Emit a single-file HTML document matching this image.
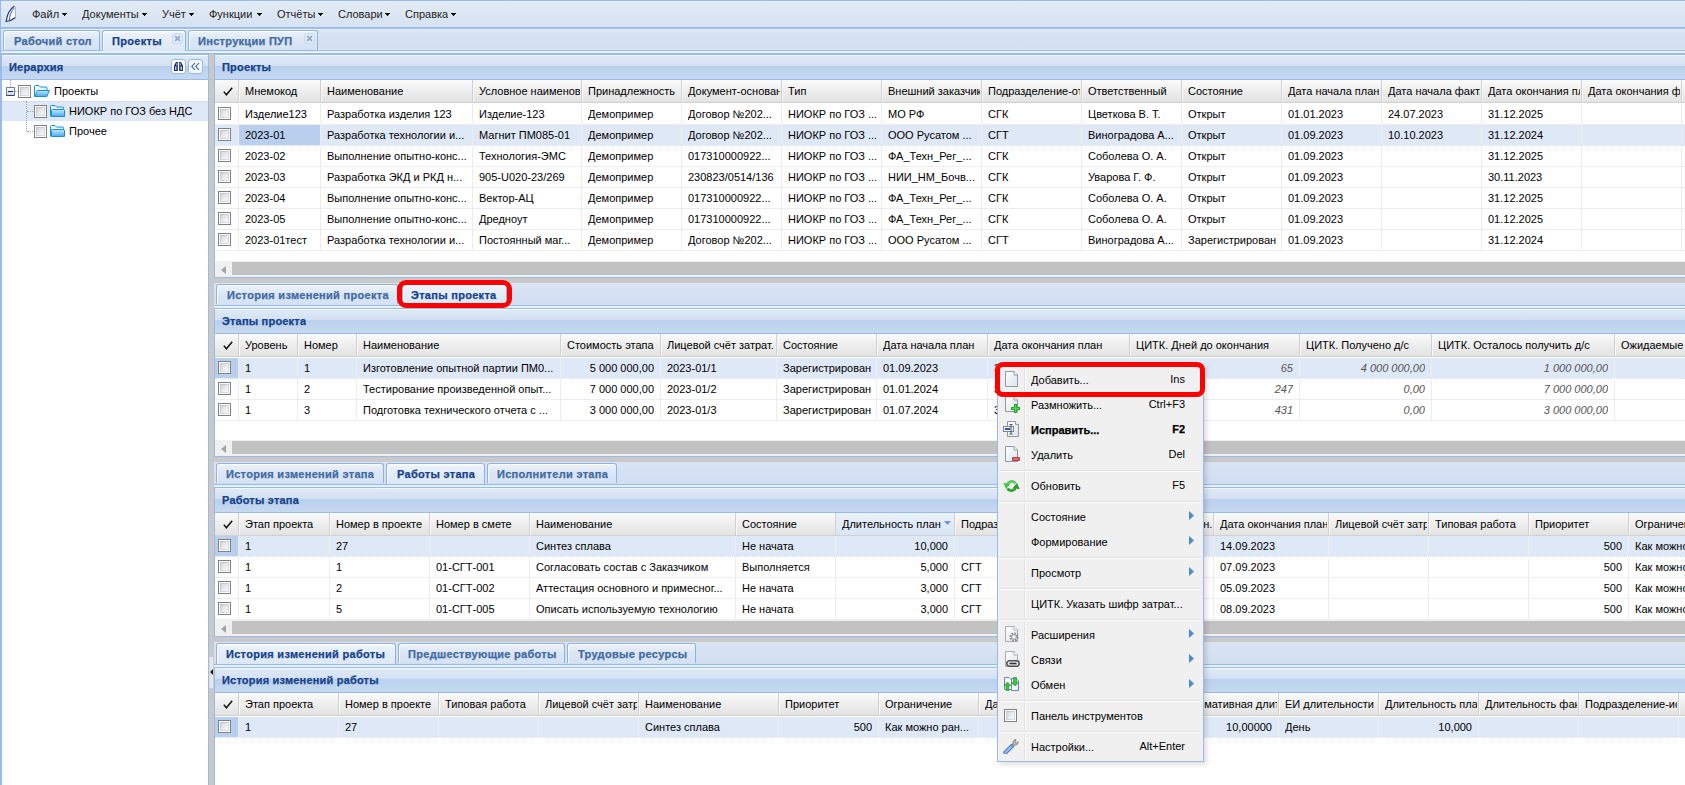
<!DOCTYPE html>
<html><head><meta charset="utf-8"><style>
html,body{margin:0;padding:0;}
body{width:1685px;height:785px;overflow:hidden;position:relative;background:#fff;font-family:"Liberation Sans",sans-serif;font-size:11px;color:#000;}
body>div,body>svg{position:absolute;box-sizing:content-box;}
.t{white-space:nowrap;overflow:hidden;}
.b{font-weight:bold;-webkit-text-stroke:0.25px currentColor;}
.mi{color:#222;}
.dd{display:inline-block;width:0;height:0;border-left:2.5px solid transparent;border-right:2.5px solid transparent;border-top:3px solid #000;margin-left:4px;vertical-align:2px;}
.cb{width:11px;height:11px;border:1px solid #808080;background:linear-gradient(135deg,#c5c9d1,#eef0f3 60%,#fafbfc);box-shadow:inset 0 0 0 1px #fff,inset 0 0 0 2px rgba(160,165,175,.35);}
</style></head><body>
<svg width="0" height="0" style="position:absolute"><defs>
<linearGradient id="gf" x1="0" y1="0" x2="0" y2="1"><stop offset="0" stop-color="#c4e6fc"/><stop offset="1" stop-color="#4aaaf0"/></linearGradient>
<linearGradient id="gp" x1="0" y1="0" x2="1" y2="1"><stop offset="0" stop-color="#ffffff"/><stop offset="1" stop-color="#dde3e8"/></linearGradient>
</defs></svg>
<div style="left:0px;top:0px;width:1685px;height:28px;background:linear-gradient(#e3ebf6,#d6e2f2)"></div>
<div style="left:0px;top:0px;width:1685px;height:1px;background:#99bbe8"></div>
<div style="left:0px;top:27px;width:1685px;height:1px;background:#99bbe8"></div>
<div style="left:0px;top:0px;width:1px;height:785px;background:#99bbe8"></div>
<svg style="left:4px;top:4px" width="14" height="20" viewBox="0 0 14 20"><path d="M10.5 2 C6 5 3 11 2.2 17.5 C6 17 9 15.5 11.5 13.5 L11.2 3 Z" fill="#f7f9fc"/><path d="M10.5 2 C6 5 3 11 2.2 17.5 C6 17 9 15.5 11.5 13.5" fill="none" stroke="#1f2f80" stroke-width="1.2"/><path d="M10.2 4 C7.5 7 5.6 11 5.3 16.2" fill="none" stroke="#3a4e9e" stroke-width="0.9"/><path d="M10.5 2 L11.3 3 L11.5 13.5" fill="none" stroke="#a3aab8" stroke-width="0.9"/></svg>
<div class="t mi" style="left:32px;top:7px;height:14px;line-height:14px">Файл</div>
<svg style="left:62px;top:13px" width="5" height="3" shape-rendering="crispEdges"><rect x="0" y="0" width="5" height="1" fill="#000"/><rect x="1" y="1" width="3" height="1" fill="#000"/><rect x="2" y="2" width="1" height="1" fill="#000"/></svg>
<div class="t mi" style="left:82px;top:7px;height:14px;line-height:14px">Документы</div>
<svg style="left:142px;top:13px" width="5" height="3" shape-rendering="crispEdges"><rect x="0" y="0" width="5" height="1" fill="#000"/><rect x="1" y="1" width="3" height="1" fill="#000"/><rect x="2" y="2" width="1" height="1" fill="#000"/></svg>
<div class="t mi" style="left:162px;top:7px;height:14px;line-height:14px">Учёт</div>
<svg style="left:189px;top:13px" width="5" height="3" shape-rendering="crispEdges"><rect x="0" y="0" width="5" height="1" fill="#000"/><rect x="1" y="1" width="3" height="1" fill="#000"/><rect x="2" y="2" width="1" height="1" fill="#000"/></svg>
<div class="t mi" style="left:209px;top:7px;height:14px;line-height:14px">Функции</div>
<svg style="left:257px;top:13px" width="5" height="3" shape-rendering="crispEdges"><rect x="0" y="0" width="5" height="1" fill="#000"/><rect x="1" y="1" width="3" height="1" fill="#000"/><rect x="2" y="2" width="1" height="1" fill="#000"/></svg>
<div class="t mi" style="left:277px;top:7px;height:14px;line-height:14px">Отчёты</div>
<svg style="left:318px;top:13px" width="5" height="3" shape-rendering="crispEdges"><rect x="0" y="0" width="5" height="1" fill="#000"/><rect x="1" y="1" width="3" height="1" fill="#000"/><rect x="2" y="2" width="1" height="1" fill="#000"/></svg>
<div class="t mi" style="left:338px;top:7px;height:14px;line-height:14px">Словари</div>
<svg style="left:385px;top:13px" width="5" height="3" shape-rendering="crispEdges"><rect x="0" y="0" width="5" height="1" fill="#000"/><rect x="1" y="1" width="3" height="1" fill="#000"/><rect x="2" y="2" width="1" height="1" fill="#000"/></svg>
<div class="t mi" style="left:405px;top:7px;height:14px;line-height:14px">Справка</div>
<svg style="left:451px;top:13px" width="5" height="3" shape-rendering="crispEdges"><rect x="0" y="0" width="5" height="1" fill="#000"/><rect x="1" y="1" width="3" height="1" fill="#000"/><rect x="2" y="2" width="1" height="1" fill="#000"/></svg>
<div style="left:1px;top:28px;width:1684px;height:22px;background:linear-gradient(#dbe6f4,#d2dff0)"></div>
<div style="left:1px;top:28px;width:1684px;height:1px;background:#a3c2ea"></div>
<div style="left:1px;top:29px;width:1684px;height:1px;background:#e4eefa"></div>
<div style="left:1px;top:50px;width:1684px;height:1px;background:#99bbe8"></div>
<div style="left:1px;top:51px;width:1684px;height:2px;background:#e8f2fb"></div>
<div style="left:1px;top:49px;width:1684px;height:1px;background:#dfe9f6"></div>
<div style="left:1px;top:53px;width:1684px;height:1px;background:#99bbe8"></div>
<div style="left:3px;top:30px;width:95px;height:19px;border:1px solid #8db2e3;border-bottom:none;border-radius:3px 3px 0 0;background:linear-gradient(#eef3fa 0,#dde7f5 40%,#d4e2f4 100%);box-shadow:inset 1px 1px 0 rgba(255,255,255,.8)"></div>
<div class="t b" style="left:14px;top:31px;height:20px;line-height:21px;color:#416aa3;letter-spacing:0.3px">Рабочий стол</div>
<div style="left:102px;top:30px;width:82px;height:20px;border:1px solid #8db2e3;border-bottom:none;border-radius:3px 3px 0 0;background:linear-gradient(#ffffff 0,#e9f0fa 3px,#dce8f7 100%);box-shadow:inset 1px 1px 0 rgba(255,255,255,.8)"></div>
<div class="t b" style="left:112px;top:31px;height:20px;line-height:21px;color:#15428b;letter-spacing:0.3px">Проекты</div>
<div style="left:172px;top:33px;width:9px;height:9px;border:1px solid #c5d6ee;border-radius:3px;background:#e6eef9"></div>
<svg style="left:174px;top:35px" width="7" height="7" viewBox="0 0 7 7"><path d="M1 1 L6 6 M6 1 L1 6" stroke="#93acd0" stroke-width="1.8"/></svg>
<div style="left:188px;top:30px;width:128px;height:19px;border:1px solid #8db2e3;border-bottom:none;border-radius:3px 3px 0 0;background:linear-gradient(#eef3fa 0,#dde7f5 40%,#d4e2f4 100%);box-shadow:inset 1px 1px 0 rgba(255,255,255,.8)"></div>
<div class="t b" style="left:198px;top:31px;height:20px;line-height:21px;color:#416aa3;letter-spacing:0.3px">Инструкции ПУП</div>
<div style="left:304px;top:33px;width:9px;height:9px;border:1px solid #c5d6ee;border-radius:3px;background:#e6eef9"></div>
<svg style="left:306px;top:35px" width="7" height="7" viewBox="0 0 7 7"><path d="M1 1 L6 6 M6 1 L1 6" stroke="#93acd0" stroke-width="1.8"/></svg>
<div style="left:1px;top:54px;width:207px;height:731px;background:#fff"></div>
<div style="left:1px;top:53px;width:1px;height:732px;background:#99bbe8"></div>
<div style="left:2px;top:54px;width:206px;height:25px;background:linear-gradient(#e0eaf7 0,#d3e1f3 12px,#bad0ee 12px,#c6d9f1 100%)"></div>
<div style="left:2px;top:54px;width:206px;height:1px;background:#f3f7fc"></div>
<div style="left:2px;top:79px;width:206px;height:1px;background:#99bbe8"></div>
<div class="t b" style="left:9px;top:54px;height:25px;line-height:26px;color:#15428b;letter-spacing:0.2px">Иерархия</div>
<div style="left:1px;top:54px;width:208px;height:1px;background:#99bbe8"></div>
<div style="left:2px;top:55px;width:206px;height:1px;background:#f3f7fc"></div>
<div style="left:208px;top:53px;width:1px;height:732px;background:#99bbe8"></div>
<div style="left:171px;top:59px;width:13px;height:13px;border:1px solid #99bbe8;border-radius:3px;background:#fff"></div>
<svg style="left:173px;top:61px" width="11" height="11" viewBox="0 0 11 11"><path d="M1 10 V4.7 L3 1 H4.8 V10 Z M6.2 10 V1 H8 L10 4.7 V10 Z" fill="#1c2a5e"/><rect x="1.9" y="5.4" width="1.6" height="3.6" fill="#a8c2f6"/><rect x="7.5" y="5.4" width="1.6" height="3.6" fill="#a8c2f6"/><rect x="3.2" y="2.3" width="1" height="2.2" fill="#9ab6f0"/><rect x="6.8" y="2.3" width="1" height="2.2" fill="#9ab6f0"/></svg>
<div style="left:188px;top:59px;width:13px;height:13px;border:1px solid #99bbe8;border-radius:3px;background:#f2f7fd"></div>
<svg style="left:190px;top:61px" width="11" height="11" viewBox="0 0 11 11"><path d="M5 2 L1.8 5.5 L5 9 M9 2 L5.8 5.5 L9 9" stroke="#2d5c9a" stroke-width="1.1" fill="none"/></svg>
<div style="left:10px;top:80px;width:0;height:7px;border-left:1px dotted #a0a0a0"></div>
<div style="left:15px;top:91px;width:3px;height:0;border-top:1px dotted #a0a0a0"></div>
<div style="left:2px;top:101px;width:206px;height:19px;background:#dfe8f6;border-top:1px dotted #c8d4e4"></div>
<div style="left:26px;top:101px;width:0;height:30px;border-left:1px dotted #a0a0a0"></div>
<div style="left:27px;top:111px;width:6px;height:0;border-top:1px dotted #a0a0a0"></div>
<div style="left:27px;top:131px;width:6px;height:0;border-top:1px dotted #a0a0a0"></div>
<div style="left:6px;top:87px;width:7px;height:7px;border:1px solid #6b7f9e;border-bottom-color:#2f4468;border-radius:1px;background:linear-gradient(#ffffff,#c9d5e6)"></div>
<div style="left:8px;top:91px;width:5px;height:1px;background:#1a2d55"></div>
<div class="cb" style="left:18px;top:85px"></div>
<svg style="left:34px;top:85px" width="16" height="12" viewBox="0 0 16 12"><path d="M0.5 11.5 V1.5 Q0.5 0.5 1.5 0.5 H5 L6.5 2 H12 Q13 2 13 3 V5" fill="#e8f4fd" stroke="#1b8fd2"/><path d="M0.8 11.5 L3.5 5.5 H15.5 L12.8 11.5 Z" fill="url(#gf)" stroke="#1b8fd2" stroke-linejoin="round"/></svg>
<div class="t" style="left:54px;top:81px;height:20px;line-height:20px;">Проекты</div>
<div class="cb" style="left:34px;top:105px"></div>
<svg style="left:50px;top:105px" width="15" height="12" viewBox="0 0 15 12"><path d="M0.5 11.5 V1.5 Q0.5 0.5 1.5 0.5 H5 L6.5 2 H12.5 Q13.5 2 13.5 3 V4.5" fill="#e8f4fd" stroke="#1b8fd2"/><path d="M1.5 11.5 V5.5 Q1.5 4.5 2.5 4.5 H13.5 Q14.5 4.5 14.5 5.5 V11.5 Z" fill="url(#gf)" stroke="#1b8fd2"/></svg>
<div class="t" style="left:69px;top:101px;height:20px;line-height:20px;">НИОКР по ГОЗ без НДС</div>
<div class="cb" style="left:34px;top:125px"></div>
<svg style="left:50px;top:125px" width="15" height="12" viewBox="0 0 15 12"><path d="M0.5 11.5 V1.5 Q0.5 0.5 1.5 0.5 H5 L6.5 2 H12.5 Q13.5 2 13.5 3 V4.5" fill="#e8f4fd" stroke="#1b8fd2"/><path d="M1.5 11.5 V5.5 Q1.5 4.5 2.5 4.5 H13.5 Q14.5 4.5 14.5 5.5 V11.5 Z" fill="url(#gf)" stroke="#1b8fd2"/></svg>
<div class="t" style="left:69px;top:121px;height:20px;line-height:20px;">Прочее</div>
<div style="left:209px;top:54px;width:5px;height:731px;background:#c9c9c9"></div>
<div style="left:209px;top:657px;width:4px;height:31px;background:linear-gradient(90deg,#dcdcdc,#efefef)"></div>
<svg style="left:210px;top:669px" width="3" height="6" viewBox="0 0 3 6"><path d="M0 3 L3 0 V6 Z" fill="#222"/></svg>
<div style="left:214px;top:54px;width:1471px;height:731px;background:#fff"></div>
<div style="left:214px;top:53px;width:1px;height:732px;background:#99bbe8"></div>
<div style="left:215px;top:54px;width:1470px;height:25px;background:linear-gradient(#e0eaf7 0,#d3e1f3 12px,#bad0ee 12px,#c6d9f1 100%)"></div>
<div style="left:215px;top:54px;width:1470px;height:1px;background:#f3f7fc"></div>
<div style="left:215px;top:79px;width:1470px;height:1px;background:#99bbe8"></div>
<div class="t b" style="left:222px;top:54px;height:25px;line-height:26px;color:#15428b;letter-spacing:0.2px">Проекты</div>
<div style="left:214px;top:54px;width:1471px;height:1px;background:#99bbe8"></div>
<div style="left:215px;top:55px;width:1470px;height:1px;background:#f3f7fc"></div>
<div style="left:215px;top:80px;width:1470px;height:22px;background:linear-gradient(#fbfbfb,#ebebeb 60%,#e3e3e3)"></div>
<div style="left:215px;top:102px;width:1470px;height:1px;background:#d0d0d0"></div>
<div style="left:215px;top:103px;width:1470px;height:682px;background:#fff"></div>
<div style="left:238px;top:80px;width:1px;height:22px;background:#d0d0d0"></div>
<div style="left:239px;top:80px;width:1px;height:22px;background:#f8f8f8"></div>
<svg style="left:223px;top:87px" width="10" height="9" viewBox="0 0 10 9"><path d="M0.8 4.6 L3.4 7.8 L9.2 0.8" stroke="#111" stroke-width="1.5" fill="none"/></svg>
<div style="left:320px;top:80px;width:1px;height:22px;background:#d0d0d0"></div>
<div style="left:321px;top:80px;width:1px;height:22px;background:#f8f8f8"></div>
<div class="t" style="left:245px;top:80px;width:74px;height:22px;line-height:22px">Мнемокод</div>
<div style="left:472px;top:80px;width:1px;height:22px;background:#d0d0d0"></div>
<div style="left:473px;top:80px;width:1px;height:22px;background:#f8f8f8"></div>
<div class="t" style="left:327px;top:80px;width:144px;height:22px;line-height:22px">Наименование</div>
<div style="left:581px;top:80px;width:1px;height:22px;background:#d0d0d0"></div>
<div style="left:582px;top:80px;width:1px;height:22px;background:#f8f8f8"></div>
<div class="t" style="left:479px;top:80px;width:101px;height:22px;line-height:22px">Условное наименование</div>
<div style="left:681px;top:80px;width:1px;height:22px;background:#d0d0d0"></div>
<div style="left:682px;top:80px;width:1px;height:22px;background:#f8f8f8"></div>
<div class="t" style="left:588px;top:80px;width:92px;height:22px;line-height:22px">Принадлежность</div>
<div style="left:781px;top:80px;width:1px;height:22px;background:#d0d0d0"></div>
<div style="left:782px;top:80px;width:1px;height:22px;background:#f8f8f8"></div>
<div class="t" style="left:688px;top:80px;width:92px;height:22px;line-height:22px">Документ-основание</div>
<div style="left:881px;top:80px;width:1px;height:22px;background:#d0d0d0"></div>
<div style="left:882px;top:80px;width:1px;height:22px;background:#f8f8f8"></div>
<div class="t" style="left:788px;top:80px;width:92px;height:22px;line-height:22px">Тип</div>
<div style="left:981px;top:80px;width:1px;height:22px;background:#d0d0d0"></div>
<div style="left:982px;top:80px;width:1px;height:22px;background:#f8f8f8"></div>
<div class="t" style="left:888px;top:80px;width:92px;height:22px;line-height:22px">Внешний заказчик</div>
<div style="left:1081px;top:80px;width:1px;height:22px;background:#d0d0d0"></div>
<div style="left:1082px;top:80px;width:1px;height:22px;background:#f8f8f8"></div>
<div class="t" style="left:988px;top:80px;width:92px;height:22px;line-height:22px">Подразделение-ответственный</div>
<div style="left:1181px;top:80px;width:1px;height:22px;background:#d0d0d0"></div>
<div style="left:1182px;top:80px;width:1px;height:22px;background:#f8f8f8"></div>
<div class="t" style="left:1088px;top:80px;width:92px;height:22px;line-height:22px">Ответственный</div>
<div style="left:1281px;top:80px;width:1px;height:22px;background:#d0d0d0"></div>
<div style="left:1282px;top:80px;width:1px;height:22px;background:#f8f8f8"></div>
<div class="t" style="left:1188px;top:80px;width:92px;height:22px;line-height:22px">Состояние</div>
<div style="left:1381px;top:80px;width:1px;height:22px;background:#d0d0d0"></div>
<div style="left:1382px;top:80px;width:1px;height:22px;background:#f8f8f8"></div>
<div class="t" style="left:1288px;top:80px;width:92px;height:22px;line-height:22px">Дата начала план.</div>
<div style="left:1481px;top:80px;width:1px;height:22px;background:#d0d0d0"></div>
<div style="left:1482px;top:80px;width:1px;height:22px;background:#f8f8f8"></div>
<div class="t" style="left:1388px;top:80px;width:92px;height:22px;line-height:22px">Дата начала факт.</div>
<div style="left:1581px;top:80px;width:1px;height:22px;background:#d0d0d0"></div>
<div style="left:1582px;top:80px;width:1px;height:22px;background:#f8f8f8"></div>
<div class="t" style="left:1488px;top:80px;width:92px;height:22px;line-height:22px">Дата окончания план</div>
<div style="left:1681px;top:80px;width:1px;height:22px;background:#d0d0d0"></div>
<div style="left:1682px;top:80px;width:1px;height:22px;background:#f8f8f8"></div>
<div class="t" style="left:1588px;top:80px;width:92px;height:22px;line-height:22px">Дата окончания факт</div>
<div style="left:1781px;top:80px;width:1px;height:22px;background:#d0d0d0"></div>
<div style="left:1782px;top:80px;width:1px;height:22px;background:#f8f8f8"></div>
<div style="left:215px;top:124px;width:1470px;height:1px;background:#ededed"></div>
<div style="left:238px;top:104px;width:1px;height:21px;background:#ededed"></div>
<div class="cb" style="left:218px;top:107px"></div>
<div style="left:320px;top:104px;width:1px;height:21px;background:#ededed"></div>
<div class="t" style="left:245px;top:104px;width:74px;height:20px;line-height:20px;">Изделие123</div>
<div style="left:472px;top:104px;width:1px;height:21px;background:#ededed"></div>
<div class="t" style="left:327px;top:104px;width:144px;height:20px;line-height:20px;">Разработка изделия 123</div>
<div style="left:581px;top:104px;width:1px;height:21px;background:#ededed"></div>
<div class="t" style="left:479px;top:104px;width:101px;height:20px;line-height:20px;">Изделие-123</div>
<div style="left:681px;top:104px;width:1px;height:21px;background:#ededed"></div>
<div class="t" style="left:588px;top:104px;width:92px;height:20px;line-height:20px;">Демопример</div>
<div style="left:781px;top:104px;width:1px;height:21px;background:#ededed"></div>
<div class="t" style="left:688px;top:104px;width:92px;height:20px;line-height:20px;">Договор №202...</div>
<div style="left:881px;top:104px;width:1px;height:21px;background:#ededed"></div>
<div class="t" style="left:788px;top:104px;width:92px;height:20px;line-height:20px;">НИОКР по ГОЗ ...</div>
<div style="left:981px;top:104px;width:1px;height:21px;background:#ededed"></div>
<div class="t" style="left:888px;top:104px;width:92px;height:20px;line-height:20px;">МО РФ</div>
<div style="left:1081px;top:104px;width:1px;height:21px;background:#ededed"></div>
<div class="t" style="left:988px;top:104px;width:92px;height:20px;line-height:20px;">СГК</div>
<div style="left:1181px;top:104px;width:1px;height:21px;background:#ededed"></div>
<div class="t" style="left:1088px;top:104px;width:92px;height:20px;line-height:20px;">Цветкова В. Т.</div>
<div style="left:1281px;top:104px;width:1px;height:21px;background:#ededed"></div>
<div class="t" style="left:1188px;top:104px;width:92px;height:20px;line-height:20px;">Открыт</div>
<div style="left:1381px;top:104px;width:1px;height:21px;background:#ededed"></div>
<div class="t" style="left:1288px;top:104px;width:92px;height:20px;line-height:20px;">01.01.2023</div>
<div style="left:1481px;top:104px;width:1px;height:21px;background:#ededed"></div>
<div class="t" style="left:1388px;top:104px;width:92px;height:20px;line-height:20px;">24.07.2023</div>
<div style="left:1581px;top:104px;width:1px;height:21px;background:#ededed"></div>
<div class="t" style="left:1488px;top:104px;width:92px;height:20px;line-height:20px;">31.12.2025</div>
<div style="left:1681px;top:104px;width:1px;height:21px;background:#ededed"></div>
<div style="left:1781px;top:104px;width:1px;height:21px;background:#ededed"></div>
<div style="left:215px;top:125px;width:1470px;height:20px;background:#dfe8f6"></div>
<div style="left:239px;top:125px;width:81px;height:20px;background:#b8cfee"></div>
<div style="left:215px;top:145px;width:1470px;height:0;border-top:1px dotted #cfdbee"></div>
<div style="left:238px;top:124px;width:1px;height:21px;background:#ededed"></div>
<div class="cb" style="left:218px;top:128px"></div>
<div style="left:320px;top:124px;width:1px;height:21px;background:#ededed"></div>
<div class="t" style="left:245px;top:125px;width:74px;height:20px;line-height:20px;">2023-01</div>
<div style="left:472px;top:124px;width:1px;height:21px;background:#ededed"></div>
<div class="t" style="left:327px;top:125px;width:144px;height:20px;line-height:20px;">Разработка технологии и...</div>
<div style="left:581px;top:124px;width:1px;height:21px;background:#ededed"></div>
<div class="t" style="left:479px;top:125px;width:101px;height:20px;line-height:20px;">Магнит ПМ085-01</div>
<div style="left:681px;top:124px;width:1px;height:21px;background:#ededed"></div>
<div class="t" style="left:588px;top:125px;width:92px;height:20px;line-height:20px;">Демопример</div>
<div style="left:781px;top:124px;width:1px;height:21px;background:#ededed"></div>
<div class="t" style="left:688px;top:125px;width:92px;height:20px;line-height:20px;">Договор №202...</div>
<div style="left:881px;top:124px;width:1px;height:21px;background:#ededed"></div>
<div class="t" style="left:788px;top:125px;width:92px;height:20px;line-height:20px;">НИОКР по ГОЗ ...</div>
<div style="left:981px;top:124px;width:1px;height:21px;background:#ededed"></div>
<div class="t" style="left:888px;top:125px;width:92px;height:20px;line-height:20px;">ООО Русатом ...</div>
<div style="left:1081px;top:124px;width:1px;height:21px;background:#ededed"></div>
<div class="t" style="left:988px;top:125px;width:92px;height:20px;line-height:20px;">СГТ</div>
<div style="left:1181px;top:124px;width:1px;height:21px;background:#ededed"></div>
<div class="t" style="left:1088px;top:125px;width:92px;height:20px;line-height:20px;">Виноградова А...</div>
<div style="left:1281px;top:124px;width:1px;height:21px;background:#ededed"></div>
<div class="t" style="left:1188px;top:125px;width:92px;height:20px;line-height:20px;">Открыт</div>
<div style="left:1381px;top:124px;width:1px;height:21px;background:#ededed"></div>
<div class="t" style="left:1288px;top:125px;width:92px;height:20px;line-height:20px;">01.09.2023</div>
<div style="left:1481px;top:124px;width:1px;height:21px;background:#ededed"></div>
<div class="t" style="left:1388px;top:125px;width:92px;height:20px;line-height:20px;">10.10.2023</div>
<div style="left:1581px;top:124px;width:1px;height:21px;background:#ededed"></div>
<div class="t" style="left:1488px;top:125px;width:92px;height:20px;line-height:20px;">31.12.2024</div>
<div style="left:1681px;top:124px;width:1px;height:21px;background:#ededed"></div>
<div style="left:1781px;top:124px;width:1px;height:21px;background:#ededed"></div>
<div style="left:215px;top:166px;width:1470px;height:1px;background:#ededed"></div>
<div style="left:238px;top:145px;width:1px;height:21px;background:#ededed"></div>
<div class="cb" style="left:218px;top:149px"></div>
<div style="left:320px;top:145px;width:1px;height:21px;background:#ededed"></div>
<div class="t" style="left:245px;top:146px;width:74px;height:20px;line-height:20px;">2023-02</div>
<div style="left:472px;top:145px;width:1px;height:21px;background:#ededed"></div>
<div class="t" style="left:327px;top:146px;width:144px;height:20px;line-height:20px;">Выполнение опытно-конс...</div>
<div style="left:581px;top:145px;width:1px;height:21px;background:#ededed"></div>
<div class="t" style="left:479px;top:146px;width:101px;height:20px;line-height:20px;">Технология-ЭМС</div>
<div style="left:681px;top:145px;width:1px;height:21px;background:#ededed"></div>
<div class="t" style="left:588px;top:146px;width:92px;height:20px;line-height:20px;">Демопример</div>
<div style="left:781px;top:145px;width:1px;height:21px;background:#ededed"></div>
<div class="t" style="left:688px;top:146px;width:92px;height:20px;line-height:20px;">017310000922...</div>
<div style="left:881px;top:145px;width:1px;height:21px;background:#ededed"></div>
<div class="t" style="left:788px;top:146px;width:92px;height:20px;line-height:20px;">НИОКР по ГОЗ ...</div>
<div style="left:981px;top:145px;width:1px;height:21px;background:#ededed"></div>
<div class="t" style="left:888px;top:146px;width:92px;height:20px;line-height:20px;">ФА_Техн_Рег_...</div>
<div style="left:1081px;top:145px;width:1px;height:21px;background:#ededed"></div>
<div class="t" style="left:988px;top:146px;width:92px;height:20px;line-height:20px;">СГК</div>
<div style="left:1181px;top:145px;width:1px;height:21px;background:#ededed"></div>
<div class="t" style="left:1088px;top:146px;width:92px;height:20px;line-height:20px;">Соболева О. А.</div>
<div style="left:1281px;top:145px;width:1px;height:21px;background:#ededed"></div>
<div class="t" style="left:1188px;top:146px;width:92px;height:20px;line-height:20px;">Открыт</div>
<div style="left:1381px;top:145px;width:1px;height:21px;background:#ededed"></div>
<div class="t" style="left:1288px;top:146px;width:92px;height:20px;line-height:20px;">01.09.2023</div>
<div style="left:1481px;top:145px;width:1px;height:21px;background:#ededed"></div>
<div style="left:1581px;top:145px;width:1px;height:21px;background:#ededed"></div>
<div class="t" style="left:1488px;top:146px;width:92px;height:20px;line-height:20px;">31.12.2025</div>
<div style="left:1681px;top:145px;width:1px;height:21px;background:#ededed"></div>
<div style="left:1781px;top:145px;width:1px;height:21px;background:#ededed"></div>
<div style="left:215px;top:187px;width:1470px;height:1px;background:#ededed"></div>
<div style="left:238px;top:166px;width:1px;height:21px;background:#ededed"></div>
<div class="cb" style="left:218px;top:170px"></div>
<div style="left:320px;top:166px;width:1px;height:21px;background:#ededed"></div>
<div class="t" style="left:245px;top:167px;width:74px;height:20px;line-height:20px;">2023-03</div>
<div style="left:472px;top:166px;width:1px;height:21px;background:#ededed"></div>
<div class="t" style="left:327px;top:167px;width:144px;height:20px;line-height:20px;">Разработка ЭКД и РКД н...</div>
<div style="left:581px;top:166px;width:1px;height:21px;background:#ededed"></div>
<div class="t" style="left:479px;top:167px;width:101px;height:20px;line-height:20px;">905-U020-23/269</div>
<div style="left:681px;top:166px;width:1px;height:21px;background:#ededed"></div>
<div class="t" style="left:588px;top:167px;width:92px;height:20px;line-height:20px;">Демопример</div>
<div style="left:781px;top:166px;width:1px;height:21px;background:#ededed"></div>
<div class="t" style="left:688px;top:167px;width:92px;height:20px;line-height:20px;">230823/0514/136</div>
<div style="left:881px;top:166px;width:1px;height:21px;background:#ededed"></div>
<div class="t" style="left:788px;top:167px;width:92px;height:20px;line-height:20px;">НИОКР по ГОЗ ...</div>
<div style="left:981px;top:166px;width:1px;height:21px;background:#ededed"></div>
<div class="t" style="left:888px;top:167px;width:92px;height:20px;line-height:20px;">НИИ_НМ_Бочв...</div>
<div style="left:1081px;top:166px;width:1px;height:21px;background:#ededed"></div>
<div class="t" style="left:988px;top:167px;width:92px;height:20px;line-height:20px;">СГК</div>
<div style="left:1181px;top:166px;width:1px;height:21px;background:#ededed"></div>
<div class="t" style="left:1088px;top:167px;width:92px;height:20px;line-height:20px;">Уварова Г. Ф.</div>
<div style="left:1281px;top:166px;width:1px;height:21px;background:#ededed"></div>
<div class="t" style="left:1188px;top:167px;width:92px;height:20px;line-height:20px;">Открыт</div>
<div style="left:1381px;top:166px;width:1px;height:21px;background:#ededed"></div>
<div class="t" style="left:1288px;top:167px;width:92px;height:20px;line-height:20px;">01.09.2023</div>
<div style="left:1481px;top:166px;width:1px;height:21px;background:#ededed"></div>
<div style="left:1581px;top:166px;width:1px;height:21px;background:#ededed"></div>
<div class="t" style="left:1488px;top:167px;width:92px;height:20px;line-height:20px;">30.11.2023</div>
<div style="left:1681px;top:166px;width:1px;height:21px;background:#ededed"></div>
<div style="left:1781px;top:166px;width:1px;height:21px;background:#ededed"></div>
<div style="left:215px;top:208px;width:1470px;height:1px;background:#ededed"></div>
<div style="left:238px;top:187px;width:1px;height:21px;background:#ededed"></div>
<div class="cb" style="left:218px;top:191px"></div>
<div style="left:320px;top:187px;width:1px;height:21px;background:#ededed"></div>
<div class="t" style="left:245px;top:188px;width:74px;height:20px;line-height:20px;">2023-04</div>
<div style="left:472px;top:187px;width:1px;height:21px;background:#ededed"></div>
<div class="t" style="left:327px;top:188px;width:144px;height:20px;line-height:20px;">Выполнение опытно-конс...</div>
<div style="left:581px;top:187px;width:1px;height:21px;background:#ededed"></div>
<div class="t" style="left:479px;top:188px;width:101px;height:20px;line-height:20px;">Вектор-АЦ</div>
<div style="left:681px;top:187px;width:1px;height:21px;background:#ededed"></div>
<div class="t" style="left:588px;top:188px;width:92px;height:20px;line-height:20px;">Демопример</div>
<div style="left:781px;top:187px;width:1px;height:21px;background:#ededed"></div>
<div class="t" style="left:688px;top:188px;width:92px;height:20px;line-height:20px;">017310000922...</div>
<div style="left:881px;top:187px;width:1px;height:21px;background:#ededed"></div>
<div class="t" style="left:788px;top:188px;width:92px;height:20px;line-height:20px;">НИОКР по ГОЗ ...</div>
<div style="left:981px;top:187px;width:1px;height:21px;background:#ededed"></div>
<div class="t" style="left:888px;top:188px;width:92px;height:20px;line-height:20px;">ФА_Техн_Рег_...</div>
<div style="left:1081px;top:187px;width:1px;height:21px;background:#ededed"></div>
<div class="t" style="left:988px;top:188px;width:92px;height:20px;line-height:20px;">СГК</div>
<div style="left:1181px;top:187px;width:1px;height:21px;background:#ededed"></div>
<div class="t" style="left:1088px;top:188px;width:92px;height:20px;line-height:20px;">Соболева О. А.</div>
<div style="left:1281px;top:187px;width:1px;height:21px;background:#ededed"></div>
<div class="t" style="left:1188px;top:188px;width:92px;height:20px;line-height:20px;">Открыт</div>
<div style="left:1381px;top:187px;width:1px;height:21px;background:#ededed"></div>
<div class="t" style="left:1288px;top:188px;width:92px;height:20px;line-height:20px;">01.09.2023</div>
<div style="left:1481px;top:187px;width:1px;height:21px;background:#ededed"></div>
<div style="left:1581px;top:187px;width:1px;height:21px;background:#ededed"></div>
<div class="t" style="left:1488px;top:188px;width:92px;height:20px;line-height:20px;">31.12.2025</div>
<div style="left:1681px;top:187px;width:1px;height:21px;background:#ededed"></div>
<div style="left:1781px;top:187px;width:1px;height:21px;background:#ededed"></div>
<div style="left:215px;top:229px;width:1470px;height:1px;background:#ededed"></div>
<div style="left:238px;top:208px;width:1px;height:21px;background:#ededed"></div>
<div class="cb" style="left:218px;top:212px"></div>
<div style="left:320px;top:208px;width:1px;height:21px;background:#ededed"></div>
<div class="t" style="left:245px;top:209px;width:74px;height:20px;line-height:20px;">2023-05</div>
<div style="left:472px;top:208px;width:1px;height:21px;background:#ededed"></div>
<div class="t" style="left:327px;top:209px;width:144px;height:20px;line-height:20px;">Выполнение опытно-конс...</div>
<div style="left:581px;top:208px;width:1px;height:21px;background:#ededed"></div>
<div class="t" style="left:479px;top:209px;width:101px;height:20px;line-height:20px;">Дредноут</div>
<div style="left:681px;top:208px;width:1px;height:21px;background:#ededed"></div>
<div class="t" style="left:588px;top:209px;width:92px;height:20px;line-height:20px;">Демопример</div>
<div style="left:781px;top:208px;width:1px;height:21px;background:#ededed"></div>
<div class="t" style="left:688px;top:209px;width:92px;height:20px;line-height:20px;">017310000922...</div>
<div style="left:881px;top:208px;width:1px;height:21px;background:#ededed"></div>
<div class="t" style="left:788px;top:209px;width:92px;height:20px;line-height:20px;">НИОКР по ГОЗ ...</div>
<div style="left:981px;top:208px;width:1px;height:21px;background:#ededed"></div>
<div class="t" style="left:888px;top:209px;width:92px;height:20px;line-height:20px;">ФА_Техн_Рег_...</div>
<div style="left:1081px;top:208px;width:1px;height:21px;background:#ededed"></div>
<div class="t" style="left:988px;top:209px;width:92px;height:20px;line-height:20px;">СГК</div>
<div style="left:1181px;top:208px;width:1px;height:21px;background:#ededed"></div>
<div class="t" style="left:1088px;top:209px;width:92px;height:20px;line-height:20px;">Соболева О. А.</div>
<div style="left:1281px;top:208px;width:1px;height:21px;background:#ededed"></div>
<div class="t" style="left:1188px;top:209px;width:92px;height:20px;line-height:20px;">Открыт</div>
<div style="left:1381px;top:208px;width:1px;height:21px;background:#ededed"></div>
<div class="t" style="left:1288px;top:209px;width:92px;height:20px;line-height:20px;">01.09.2023</div>
<div style="left:1481px;top:208px;width:1px;height:21px;background:#ededed"></div>
<div style="left:1581px;top:208px;width:1px;height:21px;background:#ededed"></div>
<div class="t" style="left:1488px;top:209px;width:92px;height:20px;line-height:20px;">01.12.2025</div>
<div style="left:1681px;top:208px;width:1px;height:21px;background:#ededed"></div>
<div style="left:1781px;top:208px;width:1px;height:21px;background:#ededed"></div>
<div style="left:215px;top:250px;width:1470px;height:1px;background:#ededed"></div>
<div style="left:238px;top:229px;width:1px;height:21px;background:#ededed"></div>
<div class="cb" style="left:218px;top:233px"></div>
<div style="left:320px;top:229px;width:1px;height:21px;background:#ededed"></div>
<div class="t" style="left:245px;top:230px;width:74px;height:20px;line-height:20px;">2023-01тест</div>
<div style="left:472px;top:229px;width:1px;height:21px;background:#ededed"></div>
<div class="t" style="left:327px;top:230px;width:144px;height:20px;line-height:20px;">Разработка технологии и...</div>
<div style="left:581px;top:229px;width:1px;height:21px;background:#ededed"></div>
<div class="t" style="left:479px;top:230px;width:101px;height:20px;line-height:20px;">Постоянный маг...</div>
<div style="left:681px;top:229px;width:1px;height:21px;background:#ededed"></div>
<div class="t" style="left:588px;top:230px;width:92px;height:20px;line-height:20px;">Демопример</div>
<div style="left:781px;top:229px;width:1px;height:21px;background:#ededed"></div>
<div class="t" style="left:688px;top:230px;width:92px;height:20px;line-height:20px;">Договор №202...</div>
<div style="left:881px;top:229px;width:1px;height:21px;background:#ededed"></div>
<div class="t" style="left:788px;top:230px;width:92px;height:20px;line-height:20px;">НИОКР по ГОЗ ...</div>
<div style="left:981px;top:229px;width:1px;height:21px;background:#ededed"></div>
<div class="t" style="left:888px;top:230px;width:92px;height:20px;line-height:20px;">ООО Русатом ...</div>
<div style="left:1081px;top:229px;width:1px;height:21px;background:#ededed"></div>
<div class="t" style="left:988px;top:230px;width:92px;height:20px;line-height:20px;">СГТ</div>
<div style="left:1181px;top:229px;width:1px;height:21px;background:#ededed"></div>
<div class="t" style="left:1088px;top:230px;width:92px;height:20px;line-height:20px;">Виноградова А...</div>
<div style="left:1281px;top:229px;width:1px;height:21px;background:#ededed"></div>
<div class="t" style="left:1188px;top:230px;width:92px;height:20px;line-height:20px;">Зарегистрирован</div>
<div style="left:1381px;top:229px;width:1px;height:21px;background:#ededed"></div>
<div class="t" style="left:1288px;top:230px;width:92px;height:20px;line-height:20px;">01.09.2023</div>
<div style="left:1481px;top:229px;width:1px;height:21px;background:#ededed"></div>
<div style="left:1581px;top:229px;width:1px;height:21px;background:#ededed"></div>
<div class="t" style="left:1488px;top:230px;width:92px;height:20px;line-height:20px;">31.12.2024</div>
<div style="left:1681px;top:229px;width:1px;height:21px;background:#ededed"></div>
<div style="left:1781px;top:229px;width:1px;height:21px;background:#ededed"></div>
<div style="left:215px;top:261px;width:1470px;height:16px;background:#f0f0f0"></div>
<div style="left:232px;top:262px;width:1453px;height:13px;background:#c2c2c2"></div>
<svg style="left:221px;top:266px" width="5" height="8" viewBox="0 0 5 8"><path d="M0 4 L5 0 V8 Z" fill="#a3a3a3"/></svg>
<div style="left:214px;top:277px;width:1471px;height:1px;background:#99bbe8"></div>
<div style="left:214px;top:278px;width:1471px;height:5px;background:#c9c9c9"></div>
<div style="left:214px;top:283px;width:1471px;height:22px;background:linear-gradient(#dae5f4,#d0def0)"></div>
<div style="left:214px;top:305px;width:1471px;height:1px;background:#99bbe8"></div>
<div style="left:214px;top:306px;width:1471px;height:2px;background:#e6f1fb"></div>
<div style="left:214px;top:308px;width:1471px;height:1px;background:#99bbe8"></div>
<div style="left:216px;top:284px;width:180px;height:19px;border:1px solid #8db2e3;border-bottom:none;border-radius:3px 3px 0 0;background:linear-gradient(#eef3fa 0,#dde7f5 40%,#d4e2f4 100%);box-shadow:inset 1px 1px 0 rgba(255,255,255,.8)"></div>
<div class="t b" style="left:227px;top:285px;height:20px;line-height:21px;color:#416aa3;letter-spacing:0.3px">История изменений проекта</div>
<div style="left:402px;top:284px;width:103px;height:20px;border:1px solid #8db2e3;border-bottom:none;border-radius:3px 3px 0 0;background:linear-gradient(#ffffff 0,#e9f0fa 3px,#dce8f7 100%);box-shadow:inset 1px 1px 0 rgba(255,255,255,.8)"></div>
<div class="t b" style="left:411px;top:285px;height:20px;line-height:21px;color:#15428b;letter-spacing:0.3px">Этапы проекта</div>
<div style="left:215px;top:309px;width:1470px;height:24px;background:linear-gradient(#e0eaf7 0,#d3e1f3 11px,#bad0ee 11px,#c6d9f1 100%)"></div>
<div style="left:215px;top:309px;width:1470px;height:1px;background:#f3f7fc"></div>
<div style="left:215px;top:333px;width:1470px;height:1px;background:#99bbe8"></div>
<div class="t b" style="left:222px;top:309px;height:24px;line-height:25px;color:#15428b;letter-spacing:0.2px">Этапы проекта</div>
<div style="left:215px;top:334px;width:1470px;height:22px;background:linear-gradient(#fbfbfb,#ebebeb 60%,#e3e3e3)"></div>
<div style="left:215px;top:356px;width:1470px;height:1px;background:#d0d0d0"></div>
<div style="left:215px;top:357px;width:1470px;height:428px;background:#fff"></div>
<div style="left:238px;top:334px;width:1px;height:22px;background:#d0d0d0"></div>
<div style="left:239px;top:334px;width:1px;height:22px;background:#f8f8f8"></div>
<svg style="left:223px;top:341px" width="10" height="9" viewBox="0 0 10 9"><path d="M0.8 4.6 L3.4 7.8 L9.2 0.8" stroke="#111" stroke-width="1.5" fill="none"/></svg>
<div style="left:297px;top:334px;width:1px;height:22px;background:#d0d0d0"></div>
<div style="left:298px;top:334px;width:1px;height:22px;background:#f8f8f8"></div>
<div class="t" style="left:245px;top:334px;width:51px;height:22px;line-height:22px">Уровень</div>
<div style="left:356px;top:334px;width:1px;height:22px;background:#d0d0d0"></div>
<div style="left:357px;top:334px;width:1px;height:22px;background:#f8f8f8"></div>
<div class="t" style="left:304px;top:334px;width:51px;height:22px;line-height:22px">Номер</div>
<div style="left:560px;top:334px;width:1px;height:22px;background:#d0d0d0"></div>
<div style="left:561px;top:334px;width:1px;height:22px;background:#f8f8f8"></div>
<div class="t" style="left:363px;top:334px;width:196px;height:22px;line-height:22px">Наименование</div>
<div style="left:660px;top:334px;width:1px;height:22px;background:#d0d0d0"></div>
<div style="left:661px;top:334px;width:1px;height:22px;background:#f8f8f8"></div>
<div class="t" style="left:567px;top:334px;width:92px;height:22px;line-height:22px">Стоимость этапа</div>
<div style="left:776px;top:334px;width:1px;height:22px;background:#d0d0d0"></div>
<div style="left:777px;top:334px;width:1px;height:22px;background:#f8f8f8"></div>
<div class="t" style="left:667px;top:334px;width:108px;height:22px;line-height:22px">Лицевой счёт затрат.</div>
<div style="left:876px;top:334px;width:1px;height:22px;background:#d0d0d0"></div>
<div style="left:877px;top:334px;width:1px;height:22px;background:#f8f8f8"></div>
<div class="t" style="left:783px;top:334px;width:92px;height:22px;line-height:22px">Состояние</div>
<div style="left:987px;top:334px;width:1px;height:22px;background:#d0d0d0"></div>
<div style="left:988px;top:334px;width:1px;height:22px;background:#f8f8f8"></div>
<div class="t" style="left:883px;top:334px;width:103px;height:22px;line-height:22px">Дата начала план</div>
<div style="left:1129px;top:334px;width:1px;height:22px;background:#d0d0d0"></div>
<div style="left:1130px;top:334px;width:1px;height:22px;background:#f8f8f8"></div>
<div class="t" style="left:994px;top:334px;width:134px;height:22px;line-height:22px">Дата окончания план</div>
<div style="left:1299px;top:334px;width:1px;height:22px;background:#d0d0d0"></div>
<div style="left:1300px;top:334px;width:1px;height:22px;background:#f8f8f8"></div>
<div class="t" style="left:1136px;top:334px;width:162px;height:22px;line-height:22px">ЦИТК. Дней до окончания</div>
<div style="left:1431px;top:334px;width:1px;height:22px;background:#d0d0d0"></div>
<div style="left:1432px;top:334px;width:1px;height:22px;background:#f8f8f8"></div>
<div class="t" style="left:1306px;top:334px;width:124px;height:22px;line-height:22px">ЦИТК. Получено д/с</div>
<div style="left:1614px;top:334px;width:1px;height:22px;background:#d0d0d0"></div>
<div style="left:1615px;top:334px;width:1px;height:22px;background:#f8f8f8"></div>
<div class="t" style="left:1438px;top:334px;width:175px;height:22px;line-height:22px">ЦИТК. Осталось получить д/с</div>
<div style="left:1800px;top:334px;width:1px;height:22px;background:#d0d0d0"></div>
<div style="left:1801px;top:334px;width:1px;height:22px;background:#f8f8f8"></div>
<div class="t" style="left:1621px;top:334px;width:178px;height:22px;line-height:22px">Ожидаемые</div>
<div style="left:215px;top:358px;width:1470px;height:20px;background:#dfe8f6"></div>
<div style="left:215px;top:358px;width:23px;height:20px;background:#b8cfee"></div>
<div style="left:215px;top:378px;width:1470px;height:0;border-top:1px dotted #cfdbee"></div>
<div style="left:238px;top:358px;width:1px;height:21px;background:#ededed"></div>
<div class="cb" style="left:218px;top:361px"></div>
<div style="left:297px;top:358px;width:1px;height:21px;background:#ededed"></div>
<div class="t" style="left:245px;top:358px;width:51px;height:20px;line-height:20px;">1</div>
<div style="left:356px;top:358px;width:1px;height:21px;background:#ededed"></div>
<div class="t" style="left:304px;top:358px;width:51px;height:20px;line-height:20px;">1</div>
<div style="left:560px;top:358px;width:1px;height:21px;background:#ededed"></div>
<div class="t" style="left:363px;top:358px;width:196px;height:20px;line-height:20px;">Изготовление опытной партии ПМ0...</div>
<div style="left:660px;top:358px;width:1px;height:21px;background:#ededed"></div>
<div class="t" style="left:562px;top:358px;width:92px;height:20px;line-height:20px;text-align:right;">5 000 000,00</div>
<div style="left:776px;top:358px;width:1px;height:21px;background:#ededed"></div>
<div class="t" style="left:667px;top:358px;width:108px;height:20px;line-height:20px;">2023-01/1</div>
<div style="left:876px;top:358px;width:1px;height:21px;background:#ededed"></div>
<div class="t" style="left:783px;top:358px;width:92px;height:20px;line-height:20px;">Зарегистрирован</div>
<div style="left:987px;top:358px;width:1px;height:21px;background:#ededed"></div>
<div class="t" style="left:883px;top:358px;width:103px;height:20px;line-height:20px;">01.09.2023</div>
<div style="left:1129px;top:358px;width:1px;height:21px;background:#ededed"></div>
<div class="t" style="left:994px;top:358px;width:134px;height:20px;line-height:20px;">31.12.2024</div>
<div style="left:1299px;top:358px;width:1px;height:21px;background:#ededed"></div>
<div class="t" style="left:1131px;top:358px;width:162px;height:20px;line-height:20px;text-align:right;font-style:italic;color:#555">65</div>
<div style="left:1431px;top:358px;width:1px;height:21px;background:#ededed"></div>
<div class="t" style="left:1301px;top:358px;width:124px;height:20px;line-height:20px;text-align:right;font-style:italic;color:#555">4 000 000,00</div>
<div style="left:1614px;top:358px;width:1px;height:21px;background:#ededed"></div>
<div class="t" style="left:1433px;top:358px;width:175px;height:20px;line-height:20px;text-align:right;font-style:italic;color:#555">1 000 000,00</div>
<div style="left:1800px;top:358px;width:1px;height:21px;background:#ededed"></div>
<div style="left:215px;top:399px;width:1470px;height:1px;background:#ededed"></div>
<div style="left:238px;top:378px;width:1px;height:21px;background:#ededed"></div>
<div class="cb" style="left:218px;top:382px"></div>
<div style="left:297px;top:378px;width:1px;height:21px;background:#ededed"></div>
<div class="t" style="left:245px;top:379px;width:51px;height:20px;line-height:20px;">1</div>
<div style="left:356px;top:378px;width:1px;height:21px;background:#ededed"></div>
<div class="t" style="left:304px;top:379px;width:51px;height:20px;line-height:20px;">2</div>
<div style="left:560px;top:378px;width:1px;height:21px;background:#ededed"></div>
<div class="t" style="left:363px;top:379px;width:196px;height:20px;line-height:20px;">Тестирование произведенной опыт...</div>
<div style="left:660px;top:378px;width:1px;height:21px;background:#ededed"></div>
<div class="t" style="left:562px;top:379px;width:92px;height:20px;line-height:20px;text-align:right;">7 000 000,00</div>
<div style="left:776px;top:378px;width:1px;height:21px;background:#ededed"></div>
<div class="t" style="left:667px;top:379px;width:108px;height:20px;line-height:20px;">2023-01/2</div>
<div style="left:876px;top:378px;width:1px;height:21px;background:#ededed"></div>
<div class="t" style="left:783px;top:379px;width:92px;height:20px;line-height:20px;">Зарегистрирован</div>
<div style="left:987px;top:378px;width:1px;height:21px;background:#ededed"></div>
<div class="t" style="left:883px;top:379px;width:103px;height:20px;line-height:20px;">01.01.2024</div>
<div style="left:1129px;top:378px;width:1px;height:21px;background:#ededed"></div>
<div class="t" style="left:994px;top:379px;width:134px;height:20px;line-height:20px;">31.12.2024</div>
<div style="left:1299px;top:378px;width:1px;height:21px;background:#ededed"></div>
<div class="t" style="left:1131px;top:379px;width:162px;height:20px;line-height:20px;text-align:right;font-style:italic;color:#555">247</div>
<div style="left:1431px;top:378px;width:1px;height:21px;background:#ededed"></div>
<div class="t" style="left:1301px;top:379px;width:124px;height:20px;line-height:20px;text-align:right;font-style:italic;color:#555">0,00</div>
<div style="left:1614px;top:378px;width:1px;height:21px;background:#ededed"></div>
<div class="t" style="left:1433px;top:379px;width:175px;height:20px;line-height:20px;text-align:right;font-style:italic;color:#555">7 000 000,00</div>
<div style="left:1800px;top:378px;width:1px;height:21px;background:#ededed"></div>
<div style="left:215px;top:420px;width:1470px;height:1px;background:#ededed"></div>
<div style="left:238px;top:399px;width:1px;height:21px;background:#ededed"></div>
<div class="cb" style="left:218px;top:403px"></div>
<div style="left:297px;top:399px;width:1px;height:21px;background:#ededed"></div>
<div class="t" style="left:245px;top:400px;width:51px;height:20px;line-height:20px;">1</div>
<div style="left:356px;top:399px;width:1px;height:21px;background:#ededed"></div>
<div class="t" style="left:304px;top:400px;width:51px;height:20px;line-height:20px;">3</div>
<div style="left:560px;top:399px;width:1px;height:21px;background:#ededed"></div>
<div class="t" style="left:363px;top:400px;width:196px;height:20px;line-height:20px;">Подготовка технического отчета с ...</div>
<div style="left:660px;top:399px;width:1px;height:21px;background:#ededed"></div>
<div class="t" style="left:562px;top:400px;width:92px;height:20px;line-height:20px;text-align:right;">3 000 000,00</div>
<div style="left:776px;top:399px;width:1px;height:21px;background:#ededed"></div>
<div class="t" style="left:667px;top:400px;width:108px;height:20px;line-height:20px;">2023-01/3</div>
<div style="left:876px;top:399px;width:1px;height:21px;background:#ededed"></div>
<div class="t" style="left:783px;top:400px;width:92px;height:20px;line-height:20px;">Зарегистрирован</div>
<div style="left:987px;top:399px;width:1px;height:21px;background:#ededed"></div>
<div class="t" style="left:883px;top:400px;width:103px;height:20px;line-height:20px;">01.07.2024</div>
<div style="left:1129px;top:399px;width:1px;height:21px;background:#ededed"></div>
<div class="t" style="left:994px;top:400px;width:134px;height:20px;line-height:20px;">31.12.2024</div>
<div style="left:1299px;top:399px;width:1px;height:21px;background:#ededed"></div>
<div class="t" style="left:1131px;top:400px;width:162px;height:20px;line-height:20px;text-align:right;font-style:italic;color:#555">431</div>
<div style="left:1431px;top:399px;width:1px;height:21px;background:#ededed"></div>
<div class="t" style="left:1301px;top:400px;width:124px;height:20px;line-height:20px;text-align:right;font-style:italic;color:#555">0,00</div>
<div style="left:1614px;top:399px;width:1px;height:21px;background:#ededed"></div>
<div class="t" style="left:1433px;top:400px;width:175px;height:20px;line-height:20px;text-align:right;font-style:italic;color:#555">3 000 000,00</div>
<div style="left:1800px;top:399px;width:1px;height:21px;background:#ededed"></div>
<div style="left:215px;top:440px;width:1470px;height:16px;background:#f0f0f0"></div>
<div style="left:232px;top:441px;width:1453px;height:13px;background:#c2c2c2"></div>
<svg style="left:221px;top:445px" width="5" height="8" viewBox="0 0 5 8"><path d="M0 4 L5 0 V8 Z" fill="#a3a3a3"/></svg>
<div style="left:214px;top:456px;width:1471px;height:1px;background:#99bbe8"></div>
<div style="left:214px;top:457px;width:1471px;height:5px;background:#c9c9c9"></div>
<div style="left:214px;top:462px;width:1471px;height:22px;background:linear-gradient(#dae5f4,#d0def0)"></div>
<div style="left:214px;top:484px;width:1471px;height:1px;background:#99bbe8"></div>
<div style="left:214px;top:485px;width:1471px;height:2px;background:#e6f1fb"></div>
<div style="left:214px;top:487px;width:1471px;height:1px;background:#99bbe8"></div>
<div style="left:216px;top:463px;width:166px;height:19px;border:1px solid #8db2e3;border-bottom:none;border-radius:3px 3px 0 0;background:linear-gradient(#eef3fa 0,#dde7f5 40%,#d4e2f4 100%);box-shadow:inset 1px 1px 0 rgba(255,255,255,.8)"></div>
<div class="t b" style="left:226px;top:464px;height:20px;line-height:21px;color:#416aa3;letter-spacing:0.3px">История изменений этапа</div>
<div style="left:386px;top:463px;width:97px;height:20px;border:1px solid #8db2e3;border-bottom:none;border-radius:3px 3px 0 0;background:linear-gradient(#ffffff 0,#e9f0fa 3px,#dce8f7 100%);box-shadow:inset 1px 1px 0 rgba(255,255,255,.8)"></div>
<div class="t b" style="left:397px;top:464px;height:20px;line-height:21px;color:#15428b;letter-spacing:0.3px">Работы этапа</div>
<div style="left:487px;top:463px;width:128px;height:19px;border:1px solid #8db2e3;border-bottom:none;border-radius:3px 3px 0 0;background:linear-gradient(#eef3fa 0,#dde7f5 40%,#d4e2f4 100%);box-shadow:inset 1px 1px 0 rgba(255,255,255,.8)"></div>
<div class="t b" style="left:497px;top:464px;height:20px;line-height:21px;color:#416aa3;letter-spacing:0.3px">Исполнители этапа</div>
<div style="left:215px;top:488px;width:1470px;height:24px;background:linear-gradient(#e0eaf7 0,#d3e1f3 11px,#bad0ee 11px,#c6d9f1 100%)"></div>
<div style="left:215px;top:488px;width:1470px;height:1px;background:#f3f7fc"></div>
<div style="left:215px;top:512px;width:1470px;height:1px;background:#99bbe8"></div>
<div class="t b" style="left:222px;top:488px;height:24px;line-height:25px;color:#15428b;letter-spacing:0.2px">Работы этапа</div>
<div style="left:215px;top:513px;width:1470px;height:22px;background:linear-gradient(#fbfbfb,#ebebeb 60%,#e3e3e3)"></div>
<div style="left:215px;top:535px;width:1470px;height:1px;background:#d0d0d0"></div>
<div style="left:215px;top:536px;width:1470px;height:249px;background:#fff"></div>
<div style="left:238px;top:513px;width:1px;height:22px;background:#d0d0d0"></div>
<div style="left:239px;top:513px;width:1px;height:22px;background:#f8f8f8"></div>
<svg style="left:223px;top:520px" width="10" height="9" viewBox="0 0 10 9"><path d="M0.8 4.6 L3.4 7.8 L9.2 0.8" stroke="#111" stroke-width="1.5" fill="none"/></svg>
<div style="left:329px;top:513px;width:1px;height:22px;background:#d0d0d0"></div>
<div style="left:330px;top:513px;width:1px;height:22px;background:#f8f8f8"></div>
<div class="t" style="left:245px;top:513px;width:83px;height:22px;line-height:22px">Этап проекта</div>
<div style="left:429px;top:513px;width:1px;height:22px;background:#d0d0d0"></div>
<div style="left:430px;top:513px;width:1px;height:22px;background:#f8f8f8"></div>
<div class="t" style="left:336px;top:513px;width:92px;height:22px;line-height:22px">Номер в проекте</div>
<div style="left:529px;top:513px;width:1px;height:22px;background:#d0d0d0"></div>
<div style="left:530px;top:513px;width:1px;height:22px;background:#f8f8f8"></div>
<div class="t" style="left:436px;top:513px;width:92px;height:22px;line-height:22px">Номер в смете</div>
<div style="left:735px;top:513px;width:1px;height:22px;background:#d0d0d0"></div>
<div style="left:736px;top:513px;width:1px;height:22px;background:#f8f8f8"></div>
<div class="t" style="left:536px;top:513px;width:198px;height:22px;line-height:22px">Наименование</div>
<div style="left:835px;top:513px;width:1px;height:22px;background:#d0d0d0"></div>
<div style="left:836px;top:513px;width:1px;height:22px;background:#f8f8f8"></div>
<div class="t" style="left:742px;top:513px;width:92px;height:22px;line-height:22px">Состояние</div>
<div style="left:836px;top:513px;width:118px;height:22px;background:linear-gradient(#eaf1fb,#d9e5f4)"></div>
<svg style="left:944px;top:521px" width="7" height="4" viewBox="0 0 7 4"><path d="M0 0 H7 L3.5 4 Z" fill="#6d98d2"/></svg>
<div style="left:954px;top:513px;width:1px;height:22px;background:#d0d0d0"></div>
<div style="left:955px;top:513px;width:1px;height:22px;background:#f8f8f8"></div>
<div class="t" style="left:842px;top:513px;width:111px;height:22px;line-height:22px">Длительность план</div>
<div style="left:1111px;top:513px;width:1px;height:22px;background:#d0d0d0"></div>
<div style="left:1112px;top:513px;width:1px;height:22px;background:#f8f8f8"></div>
<div class="t" style="left:961px;top:513px;width:149px;height:22px;line-height:22px">Подразделение</div>
<div style="left:1213px;top:513px;width:1px;height:22px;background:#d0d0d0"></div>
<div style="left:1214px;top:513px;width:1px;height:22px;background:#f8f8f8"></div>
<div class="t" style="left:1118px;top:513px;width:94px;height:22px;line-height:22px">Дата начала план.</div>
<div style="left:1328px;top:513px;width:1px;height:22px;background:#d0d0d0"></div>
<div style="left:1329px;top:513px;width:1px;height:22px;background:#f8f8f8"></div>
<div class="t" style="left:1220px;top:513px;width:107px;height:22px;line-height:22px">Дата окончания план</div>
<div style="left:1428px;top:513px;width:1px;height:22px;background:#d0d0d0"></div>
<div style="left:1429px;top:513px;width:1px;height:22px;background:#f8f8f8"></div>
<div class="t" style="left:1335px;top:513px;width:92px;height:22px;line-height:22px">Лицевой счёт затрат</div>
<div style="left:1528px;top:513px;width:1px;height:22px;background:#d0d0d0"></div>
<div style="left:1529px;top:513px;width:1px;height:22px;background:#f8f8f8"></div>
<div class="t" style="left:1435px;top:513px;width:92px;height:22px;line-height:22px">Типовая работа</div>
<div style="left:1628px;top:513px;width:1px;height:22px;background:#d0d0d0"></div>
<div style="left:1629px;top:513px;width:1px;height:22px;background:#f8f8f8"></div>
<div class="t" style="left:1535px;top:513px;width:92px;height:22px;line-height:22px">Приоритет</div>
<div style="left:1800px;top:513px;width:1px;height:22px;background:#d0d0d0"></div>
<div style="left:1801px;top:513px;width:1px;height:22px;background:#f8f8f8"></div>
<div class="t" style="left:1635px;top:513px;width:164px;height:22px;line-height:22px">Ограничение</div>
<div style="left:215px;top:536px;width:1470px;height:20px;background:#dfe8f6"></div>
<div style="left:215px;top:536px;width:23px;height:20px;background:#b8cfee"></div>
<div style="left:215px;top:556px;width:1470px;height:0;border-top:1px dotted #cfdbee"></div>
<div style="left:238px;top:536px;width:1px;height:21px;background:#ededed"></div>
<div class="cb" style="left:218px;top:539px"></div>
<div style="left:329px;top:536px;width:1px;height:21px;background:#ededed"></div>
<div class="t" style="left:245px;top:536px;width:83px;height:20px;line-height:20px;">1</div>
<div style="left:429px;top:536px;width:1px;height:21px;background:#ededed"></div>
<div class="t" style="left:336px;top:536px;width:92px;height:20px;line-height:20px;">27</div>
<div style="left:529px;top:536px;width:1px;height:21px;background:#ededed"></div>
<div style="left:735px;top:536px;width:1px;height:21px;background:#ededed"></div>
<div class="t" style="left:536px;top:536px;width:198px;height:20px;line-height:20px;">Синтез сплава</div>
<div style="left:835px;top:536px;width:1px;height:21px;background:#ededed"></div>
<div class="t" style="left:742px;top:536px;width:92px;height:20px;line-height:20px;">Не начата</div>
<div style="left:954px;top:536px;width:1px;height:21px;background:#ededed"></div>
<div class="t" style="left:837px;top:536px;width:111px;height:20px;line-height:20px;text-align:right;">10,000</div>
<div style="left:1111px;top:536px;width:1px;height:21px;background:#ededed"></div>
<div style="left:1213px;top:536px;width:1px;height:21px;background:#ededed"></div>
<div style="left:1328px;top:536px;width:1px;height:21px;background:#ededed"></div>
<div class="t" style="left:1220px;top:536px;width:107px;height:20px;line-height:20px;">14.09.2023</div>
<div style="left:1428px;top:536px;width:1px;height:21px;background:#ededed"></div>
<div style="left:1528px;top:536px;width:1px;height:21px;background:#ededed"></div>
<div style="left:1628px;top:536px;width:1px;height:21px;background:#ededed"></div>
<div class="t" style="left:1530px;top:536px;width:92px;height:20px;line-height:20px;text-align:right;">500</div>
<div style="left:1800px;top:536px;width:1px;height:21px;background:#ededed"></div>
<div class="t" style="left:1635px;top:536px;width:164px;height:20px;line-height:20px;">Как можно ран...</div>
<div style="left:215px;top:577px;width:1470px;height:1px;background:#ededed"></div>
<div style="left:238px;top:556px;width:1px;height:21px;background:#ededed"></div>
<div class="cb" style="left:218px;top:560px"></div>
<div style="left:329px;top:556px;width:1px;height:21px;background:#ededed"></div>
<div class="t" style="left:245px;top:557px;width:83px;height:20px;line-height:20px;">1</div>
<div style="left:429px;top:556px;width:1px;height:21px;background:#ededed"></div>
<div class="t" style="left:336px;top:557px;width:92px;height:20px;line-height:20px;">1</div>
<div style="left:529px;top:556px;width:1px;height:21px;background:#ededed"></div>
<div class="t" style="left:436px;top:557px;width:92px;height:20px;line-height:20px;">01-СГТ-001</div>
<div style="left:735px;top:556px;width:1px;height:21px;background:#ededed"></div>
<div class="t" style="left:536px;top:557px;width:198px;height:20px;line-height:20px;">Согласовать состав с Заказчиком</div>
<div style="left:835px;top:556px;width:1px;height:21px;background:#ededed"></div>
<div class="t" style="left:742px;top:557px;width:92px;height:20px;line-height:20px;">Выполняется</div>
<div style="left:954px;top:556px;width:1px;height:21px;background:#ededed"></div>
<div class="t" style="left:837px;top:557px;width:111px;height:20px;line-height:20px;text-align:right;">5,000</div>
<div style="left:1111px;top:556px;width:1px;height:21px;background:#ededed"></div>
<div class="t" style="left:961px;top:557px;width:149px;height:20px;line-height:20px;">СГТ</div>
<div style="left:1213px;top:556px;width:1px;height:21px;background:#ededed"></div>
<div style="left:1328px;top:556px;width:1px;height:21px;background:#ededed"></div>
<div class="t" style="left:1220px;top:557px;width:107px;height:20px;line-height:20px;">07.09.2023</div>
<div style="left:1428px;top:556px;width:1px;height:21px;background:#ededed"></div>
<div style="left:1528px;top:556px;width:1px;height:21px;background:#ededed"></div>
<div style="left:1628px;top:556px;width:1px;height:21px;background:#ededed"></div>
<div class="t" style="left:1530px;top:557px;width:92px;height:20px;line-height:20px;text-align:right;">500</div>
<div style="left:1800px;top:556px;width:1px;height:21px;background:#ededed"></div>
<div class="t" style="left:1635px;top:557px;width:164px;height:20px;line-height:20px;">Как можно ран...</div>
<div style="left:215px;top:598px;width:1470px;height:1px;background:#ededed"></div>
<div style="left:238px;top:577px;width:1px;height:21px;background:#ededed"></div>
<div class="cb" style="left:218px;top:581px"></div>
<div style="left:329px;top:577px;width:1px;height:21px;background:#ededed"></div>
<div class="t" style="left:245px;top:578px;width:83px;height:20px;line-height:20px;">1</div>
<div style="left:429px;top:577px;width:1px;height:21px;background:#ededed"></div>
<div class="t" style="left:336px;top:578px;width:92px;height:20px;line-height:20px;">2</div>
<div style="left:529px;top:577px;width:1px;height:21px;background:#ededed"></div>
<div class="t" style="left:436px;top:578px;width:92px;height:20px;line-height:20px;">01-СГТ-002</div>
<div style="left:735px;top:577px;width:1px;height:21px;background:#ededed"></div>
<div class="t" style="left:536px;top:578px;width:198px;height:20px;line-height:20px;">Аттестация основного и примесног...</div>
<div style="left:835px;top:577px;width:1px;height:21px;background:#ededed"></div>
<div class="t" style="left:742px;top:578px;width:92px;height:20px;line-height:20px;">Не начата</div>
<div style="left:954px;top:577px;width:1px;height:21px;background:#ededed"></div>
<div class="t" style="left:837px;top:578px;width:111px;height:20px;line-height:20px;text-align:right;">3,000</div>
<div style="left:1111px;top:577px;width:1px;height:21px;background:#ededed"></div>
<div class="t" style="left:961px;top:578px;width:149px;height:20px;line-height:20px;">СГТ</div>
<div style="left:1213px;top:577px;width:1px;height:21px;background:#ededed"></div>
<div style="left:1328px;top:577px;width:1px;height:21px;background:#ededed"></div>
<div class="t" style="left:1220px;top:578px;width:107px;height:20px;line-height:20px;">05.09.2023</div>
<div style="left:1428px;top:577px;width:1px;height:21px;background:#ededed"></div>
<div style="left:1528px;top:577px;width:1px;height:21px;background:#ededed"></div>
<div style="left:1628px;top:577px;width:1px;height:21px;background:#ededed"></div>
<div class="t" style="left:1530px;top:578px;width:92px;height:20px;line-height:20px;text-align:right;">500</div>
<div style="left:1800px;top:577px;width:1px;height:21px;background:#ededed"></div>
<div class="t" style="left:1635px;top:578px;width:164px;height:20px;line-height:20px;">Как можно ран...</div>
<div style="left:215px;top:619px;width:1470px;height:1px;background:#ededed"></div>
<div style="left:238px;top:598px;width:1px;height:21px;background:#ededed"></div>
<div class="cb" style="left:218px;top:602px"></div>
<div style="left:329px;top:598px;width:1px;height:21px;background:#ededed"></div>
<div class="t" style="left:245px;top:599px;width:83px;height:20px;line-height:20px;">1</div>
<div style="left:429px;top:598px;width:1px;height:21px;background:#ededed"></div>
<div class="t" style="left:336px;top:599px;width:92px;height:20px;line-height:20px;">5</div>
<div style="left:529px;top:598px;width:1px;height:21px;background:#ededed"></div>
<div class="t" style="left:436px;top:599px;width:92px;height:20px;line-height:20px;">01-СГТ-005</div>
<div style="left:735px;top:598px;width:1px;height:21px;background:#ededed"></div>
<div class="t" style="left:536px;top:599px;width:198px;height:20px;line-height:20px;">Описать используемую технологию</div>
<div style="left:835px;top:598px;width:1px;height:21px;background:#ededed"></div>
<div class="t" style="left:742px;top:599px;width:92px;height:20px;line-height:20px;">Не начата</div>
<div style="left:954px;top:598px;width:1px;height:21px;background:#ededed"></div>
<div class="t" style="left:837px;top:599px;width:111px;height:20px;line-height:20px;text-align:right;">3,000</div>
<div style="left:1111px;top:598px;width:1px;height:21px;background:#ededed"></div>
<div class="t" style="left:961px;top:599px;width:149px;height:20px;line-height:20px;">СГТ</div>
<div style="left:1213px;top:598px;width:1px;height:21px;background:#ededed"></div>
<div style="left:1328px;top:598px;width:1px;height:21px;background:#ededed"></div>
<div class="t" style="left:1220px;top:599px;width:107px;height:20px;line-height:20px;">08.09.2023</div>
<div style="left:1428px;top:598px;width:1px;height:21px;background:#ededed"></div>
<div style="left:1528px;top:598px;width:1px;height:21px;background:#ededed"></div>
<div style="left:1628px;top:598px;width:1px;height:21px;background:#ededed"></div>
<div class="t" style="left:1530px;top:599px;width:92px;height:20px;line-height:20px;text-align:right;">500</div>
<div style="left:1800px;top:598px;width:1px;height:21px;background:#ededed"></div>
<div class="t" style="left:1635px;top:599px;width:164px;height:20px;line-height:20px;">Как можно ран...</div>
<div style="left:215px;top:620px;width:1470px;height:16px;background:#f0f0f0"></div>
<div style="left:232px;top:621px;width:1453px;height:13px;background:#c2c2c2"></div>
<svg style="left:221px;top:625px" width="5" height="8" viewBox="0 0 5 8"><path d="M0 4 L5 0 V8 Z" fill="#a3a3a3"/></svg>
<div style="left:214px;top:636px;width:1471px;height:1px;background:#99bbe8"></div>
<div style="left:214px;top:637px;width:1471px;height:5px;background:#c9c9c9"></div>
<div style="left:214px;top:642px;width:1471px;height:22px;background:linear-gradient(#dae5f4,#d0def0)"></div>
<div style="left:214px;top:664px;width:1471px;height:1px;background:#99bbe8"></div>
<div style="left:214px;top:665px;width:1471px;height:2px;background:#e6f1fb"></div>
<div style="left:214px;top:667px;width:1471px;height:1px;background:#99bbe8"></div>
<div style="left:216px;top:643px;width:178px;height:20px;border:1px solid #8db2e3;border-bottom:none;border-radius:3px 3px 0 0;background:linear-gradient(#ffffff 0,#e9f0fa 3px,#dce8f7 100%);box-shadow:inset 1px 1px 0 rgba(255,255,255,.8)"></div>
<div class="t b" style="left:226px;top:644px;height:20px;line-height:21px;color:#15428b;letter-spacing:0.3px">История изменений работы</div>
<div style="left:398px;top:643px;width:165px;height:19px;border:1px solid #8db2e3;border-bottom:none;border-radius:3px 3px 0 0;background:linear-gradient(#eef3fa 0,#dde7f5 40%,#d4e2f4 100%);box-shadow:inset 1px 1px 0 rgba(255,255,255,.8)"></div>
<div class="t b" style="left:408px;top:644px;height:20px;line-height:21px;color:#416aa3;letter-spacing:0.3px">Предшествующие работы</div>
<div style="left:567px;top:643px;width:127px;height:19px;border:1px solid #8db2e3;border-bottom:none;border-radius:3px 3px 0 0;background:linear-gradient(#eef3fa 0,#dde7f5 40%,#d4e2f4 100%);box-shadow:inset 1px 1px 0 rgba(255,255,255,.8)"></div>
<div class="t b" style="left:578px;top:644px;height:20px;line-height:21px;color:#416aa3;letter-spacing:0.3px">Трудовые ресурсы</div>
<div style="left:215px;top:668px;width:1470px;height:24px;background:linear-gradient(#e0eaf7 0,#d3e1f3 11px,#bad0ee 11px,#c6d9f1 100%)"></div>
<div style="left:215px;top:668px;width:1470px;height:1px;background:#f3f7fc"></div>
<div style="left:215px;top:692px;width:1470px;height:1px;background:#99bbe8"></div>
<div class="t b" style="left:222px;top:668px;height:24px;line-height:25px;color:#15428b;letter-spacing:0.2px">История изменений работы</div>
<div style="left:215px;top:693px;width:1470px;height:22px;background:linear-gradient(#fbfbfb,#ebebeb 60%,#e3e3e3)"></div>
<div style="left:215px;top:715px;width:1470px;height:1px;background:#d0d0d0"></div>
<div style="left:215px;top:716px;width:1470px;height:69px;background:#fff"></div>
<div style="left:238px;top:693px;width:1px;height:22px;background:#d0d0d0"></div>
<div style="left:239px;top:693px;width:1px;height:22px;background:#f8f8f8"></div>
<svg style="left:223px;top:700px" width="10" height="9" viewBox="0 0 10 9"><path d="M0.8 4.6 L3.4 7.8 L9.2 0.8" stroke="#111" stroke-width="1.5" fill="none"/></svg>
<div style="left:338px;top:693px;width:1px;height:22px;background:#d0d0d0"></div>
<div style="left:339px;top:693px;width:1px;height:22px;background:#f8f8f8"></div>
<div class="t" style="left:245px;top:693px;width:92px;height:22px;line-height:22px">Этап проекта</div>
<div style="left:438px;top:693px;width:1px;height:22px;background:#d0d0d0"></div>
<div style="left:439px;top:693px;width:1px;height:22px;background:#f8f8f8"></div>
<div class="t" style="left:345px;top:693px;width:92px;height:22px;line-height:22px">Номер в проекте</div>
<div style="left:538px;top:693px;width:1px;height:22px;background:#d0d0d0"></div>
<div style="left:539px;top:693px;width:1px;height:22px;background:#f8f8f8"></div>
<div class="t" style="left:445px;top:693px;width:92px;height:22px;line-height:22px">Типовая работа</div>
<div style="left:638px;top:693px;width:1px;height:22px;background:#d0d0d0"></div>
<div style="left:639px;top:693px;width:1px;height:22px;background:#f8f8f8"></div>
<div class="t" style="left:545px;top:693px;width:92px;height:22px;line-height:22px">Лицевой счёт затрат</div>
<div style="left:778px;top:693px;width:1px;height:22px;background:#d0d0d0"></div>
<div style="left:779px;top:693px;width:1px;height:22px;background:#f8f8f8"></div>
<div class="t" style="left:645px;top:693px;width:132px;height:22px;line-height:22px">Наименование</div>
<div style="left:878px;top:693px;width:1px;height:22px;background:#d0d0d0"></div>
<div style="left:879px;top:693px;width:1px;height:22px;background:#f8f8f8"></div>
<div class="t" style="left:785px;top:693px;width:92px;height:22px;line-height:22px">Приоритет</div>
<div style="left:978px;top:693px;width:1px;height:22px;background:#d0d0d0"></div>
<div style="left:979px;top:693px;width:1px;height:22px;background:#f8f8f8"></div>
<div class="t" style="left:885px;top:693px;width:92px;height:22px;line-height:22px">Ограничение</div>
<div style="left:1177px;top:693px;width:1px;height:22px;background:#d0d0d0"></div>
<div style="left:1178px;top:693px;width:1px;height:22px;background:#f8f8f8"></div>
<div class="t" style="left:985px;top:693px;width:191px;height:22px;line-height:22px">Дата</div>
<div style="left:1278px;top:693px;width:1px;height:22px;background:#d0d0d0"></div>
<div style="left:1279px;top:693px;width:1px;height:22px;background:#f8f8f8"></div>
<div class="t" style="left:1184px;top:693px;width:93px;height:22px;line-height:22px">Нормативная длительность</div>
<div style="left:1378px;top:693px;width:1px;height:22px;background:#d0d0d0"></div>
<div style="left:1379px;top:693px;width:1px;height:22px;background:#f8f8f8"></div>
<div class="t" style="left:1285px;top:693px;width:92px;height:22px;line-height:22px">ЕИ длительности</div>
<div style="left:1478px;top:693px;width:1px;height:22px;background:#d0d0d0"></div>
<div style="left:1479px;top:693px;width:1px;height:22px;background:#f8f8f8"></div>
<div class="t" style="left:1385px;top:693px;width:92px;height:22px;line-height:22px">Длительность план</div>
<div style="left:1578px;top:693px;width:1px;height:22px;background:#d0d0d0"></div>
<div style="left:1579px;top:693px;width:1px;height:22px;background:#f8f8f8"></div>
<div class="t" style="left:1485px;top:693px;width:92px;height:22px;line-height:22px">Длительность факт</div>
<div style="left:1678px;top:693px;width:1px;height:22px;background:#d0d0d0"></div>
<div style="left:1679px;top:693px;width:1px;height:22px;background:#f8f8f8"></div>
<div class="t" style="left:1585px;top:693px;width:92px;height:22px;line-height:22px">Подразделение-исполнитель</div>
<div style="left:1800px;top:693px;width:1px;height:22px;background:#d0d0d0"></div>
<div style="left:1801px;top:693px;width:1px;height:22px;background:#f8f8f8"></div>
<div style="left:215px;top:717px;width:1470px;height:20px;background:#dfe8f6"></div>
<div style="left:215px;top:717px;width:23px;height:20px;background:#b8cfee"></div>
<div style="left:215px;top:737px;width:1470px;height:0;border-top:1px dotted #cfdbee"></div>
<div style="left:238px;top:717px;width:1px;height:21px;background:#ededed"></div>
<div class="cb" style="left:218px;top:720px"></div>
<div style="left:338px;top:717px;width:1px;height:21px;background:#ededed"></div>
<div class="t" style="left:245px;top:717px;width:92px;height:20px;line-height:20px;">1</div>
<div style="left:438px;top:717px;width:1px;height:21px;background:#ededed"></div>
<div class="t" style="left:345px;top:717px;width:92px;height:20px;line-height:20px;">27</div>
<div style="left:538px;top:717px;width:1px;height:21px;background:#ededed"></div>
<div style="left:638px;top:717px;width:1px;height:21px;background:#ededed"></div>
<div style="left:778px;top:717px;width:1px;height:21px;background:#ededed"></div>
<div class="t" style="left:645px;top:717px;width:132px;height:20px;line-height:20px;">Синтез сплава</div>
<div style="left:878px;top:717px;width:1px;height:21px;background:#ededed"></div>
<div class="t" style="left:780px;top:717px;width:92px;height:20px;line-height:20px;text-align:right;">500</div>
<div style="left:978px;top:717px;width:1px;height:21px;background:#ededed"></div>
<div class="t" style="left:885px;top:717px;width:92px;height:20px;line-height:20px;">Как можно ран...</div>
<div style="left:1177px;top:717px;width:1px;height:21px;background:#ededed"></div>
<div style="left:1278px;top:717px;width:1px;height:21px;background:#ededed"></div>
<div class="t" style="left:1179px;top:717px;width:93px;height:20px;line-height:20px;text-align:right;">10,00000</div>
<div style="left:1378px;top:717px;width:1px;height:21px;background:#ededed"></div>
<div class="t" style="left:1285px;top:717px;width:92px;height:20px;line-height:20px;">День</div>
<div style="left:1478px;top:717px;width:1px;height:21px;background:#ededed"></div>
<div class="t" style="left:1380px;top:717px;width:92px;height:20px;line-height:20px;text-align:right;">10,000</div>
<div style="left:1578px;top:717px;width:1px;height:21px;background:#ededed"></div>
<div style="left:1678px;top:717px;width:1px;height:21px;background:#ededed"></div>
<div style="left:1800px;top:717px;width:1px;height:21px;background:#ededed"></div>
<div style="left:397px;top:280px;width:105px;height:18px;border:5px solid #ff0000;border-radius:9px"></div>
<div style="left:1000px;top:367px;width:207px;height:398px;background:rgba(0,0,0,.12);filter:blur(2px)"></div>
<div style="left:997px;top:364px;width:205px;height:396px;border:1px solid #99bbe8;background:#f0f0f0"></div>
<div style="left:1024px;top:365px;width:1px;height:396px;background:#e0e0e0"></div>
<div style="left:1025px;top:365px;width:1px;height:396px;background:#ffffff"></div>
<div class="t" style="left:1031px;top:371px;height:18px;line-height:18px">Добавить...</div>
<div class="t" style="left:1120px;top:370px;width:65px;height:18px;line-height:18px;text-align:right">Ins</div>
<svg style="left:1004px;top:371px" width="16" height="16" viewBox="0 0 16 16"><path d="M1.5 0.5 H10 L13.5 4 V15.5 H1.5 Z" fill="url(#gp)" stroke="#8a9aa6"/><path d="M10 0.5 V4 H13.5" fill="#fff" stroke="#8a9aa6"/></svg>
<div class="t" style="left:1031px;top:396px;height:18px;line-height:18px">Размножить...</div>
<div class="t" style="left:1120px;top:395px;width:65px;height:18px;line-height:18px;text-align:right">Ctrl+F3</div>
<svg style="left:1004px;top:396px" width="16" height="16" viewBox="0 0 16 16"><path d="M1.5 0.5 H10 L13.5 4 V15.5 H1.5 Z" fill="url(#gp)" stroke="#8a9aa6"/><path d="M10 0.5 V4 H13.5" fill="#fff" stroke="#8a9aa6"/></svg>
<svg style="left:1011px;top:404px" width="9" height="9" viewBox="0 0 9 9"><path d="M4.5 1 V8 M1 4.5 H8" stroke="#1f9a1f" stroke-width="3.2" stroke-linecap="round"/><path d="M4.5 1.5 V7.5 M1.5 4.5 H7.5" stroke="#52d852" stroke-width="1.6" stroke-linecap="round"/></svg>
<div class="t b" style="left:1031px;top:421px;height:18px;line-height:18px">Исправить...</div>
<div class="t b" style="left:1120px;top:420px;width:65px;height:18px;line-height:18px;text-align:right">F2</div>
<svg style="left:1003px;top:421px" width="17" height="16" viewBox="0 0 17 16"><path d="M4.5 0.5 H12.5 L15.5 3.5 V15.5 H4.5 Z" fill="url(#gp)" stroke="#8a9aa6"/><path d="M12.5 0.5 V3.5 H15.5" fill="#fff" stroke="#8a9aa6"/><rect x="0.5" y="5.5" width="10" height="5" fill="#f4f4f4" stroke="#7d8790"/><rect x="2" y="7" width="5" height="2" fill="#2255cc"/><path d="M6.5 3.5 H9.5 M8 3.5 V13 M6.5 13 H9.5" stroke="#444" stroke-width="0.9"/></svg>
<div class="t" style="left:1031px;top:446px;height:18px;line-height:18px">Удалить</div>
<div class="t" style="left:1120px;top:445px;width:65px;height:18px;line-height:18px;text-align:right">Del</div>
<svg style="left:1004px;top:446px" width="16" height="16" viewBox="0 0 16 16"><path d="M1.5 0.5 H10 L13.5 4 V15.5 H1.5 Z" fill="url(#gp)" stroke="#8a9aa6"/><path d="M10 0.5 V4 H13.5" fill="#fff" stroke="#8a9aa6"/></svg>
<svg style="left:1012px;top:457px" width="8" height="4" viewBox="0 0 8 4"><rect x="0.3" y="0.3" width="7.4" height="3.4" rx="1" fill="#d8303a" stroke="#a01820" stroke-width="0.6"/><rect x="1.5" y="1.5" width="5" height="1" fill="#f5a0a0"/></svg>
<div style="left:1000px;top:470px;width:200px;height:1px;background:#e0e0e0"></div>
<div style="left:1000px;top:471px;width:200px;height:1px;background:#ffffff"></div>
<div class="t" style="left:1031px;top:477px;height:18px;line-height:18px">Обновить</div>
<div class="t" style="left:1120px;top:476px;width:65px;height:18px;line-height:18px;text-align:right">F5</div>
<svg style="left:1003px;top:479px" width="17" height="14" viewBox="0 0 17 14"><path d="M4.5 6.5 A4.3 4.3 0 0 1 12.5 4.5" fill="none" stroke="#56cc56" stroke-width="2.8"/><path d="M0.3 3.8 L7 5.2 L3 10 Z" fill="#48c048"/><path d="M12.5 7.5 A4.3 4.3 0 0 1 4.5 9.5" fill="none" stroke="#2fa52f" stroke-width="2.8"/><path d="M16.7 10.2 L10 8.8 L14 4 Z" fill="#2a9a2a"/></svg>
<div style="left:1000px;top:501px;width:200px;height:1px;background:#e0e0e0"></div>
<div style="left:1000px;top:502px;width:200px;height:1px;background:#ffffff"></div>
<div class="t" style="left:1031px;top:508px;height:18px;line-height:18px">Состояние</div>
<svg style="left:1189px;top:511px" width="5" height="9" viewBox="0 0 5 9"><path d="M0 0 L5 4.5 L0 9 Z" fill="#4d8ad6"/></svg>
<div class="t" style="left:1031px;top:533px;height:18px;line-height:18px">Формирование</div>
<svg style="left:1189px;top:536px" width="5" height="9" viewBox="0 0 5 9"><path d="M0 0 L5 4.5 L0 9 Z" fill="#4d8ad6"/></svg>
<div style="left:1000px;top:557px;width:200px;height:1px;background:#e0e0e0"></div>
<div style="left:1000px;top:558px;width:200px;height:1px;background:#ffffff"></div>
<div class="t" style="left:1031px;top:564px;height:18px;line-height:18px">Просмотр</div>
<svg style="left:1189px;top:567px" width="5" height="9" viewBox="0 0 5 9"><path d="M0 0 L5 4.5 L0 9 Z" fill="#4d8ad6"/></svg>
<div style="left:1000px;top:588px;width:200px;height:1px;background:#e0e0e0"></div>
<div style="left:1000px;top:589px;width:200px;height:1px;background:#ffffff"></div>
<div class="t" style="left:1031px;top:595px;height:18px;line-height:18px">ЦИТК. Указать шифр затрат...</div>
<div style="left:1000px;top:619px;width:200px;height:1px;background:#e0e0e0"></div>
<div style="left:1000px;top:620px;width:200px;height:1px;background:#ffffff"></div>
<div class="t" style="left:1031px;top:626px;height:18px;line-height:18px">Расширения</div>
<svg style="left:1189px;top:629px" width="5" height="9" viewBox="0 0 5 9"><path d="M0 0 L5 4.5 L0 9 Z" fill="#4d8ad6"/></svg>
<svg style="left:1004px;top:626px" width="16" height="16" viewBox="0 0 16 16"><path d="M1.5 0.5 H10 L13.5 4 V15.5 H1.5 Z" fill="url(#gp)" stroke="#a8aeb4"/><path d="M10 0.5 V4 H13.5" fill="#fff" stroke="#a8aeb4"/></svg>
<svg style="left:1009px;top:632px" width="10" height="10" viewBox="0 0 10 10"><circle cx="5" cy="5" r="3.6" fill="none" stroke="#8c8c8c" stroke-width="2" stroke-dasharray="1.6 1.2"/><circle cx="5" cy="5" r="2.4" fill="none" stroke="#9a9a9a" stroke-width="1"/><circle cx="5" cy="5" r="1" fill="#fff"/></svg>
<div class="t" style="left:1031px;top:651px;height:18px;line-height:18px">Связи</div>
<svg style="left:1189px;top:654px" width="5" height="9" viewBox="0 0 5 9"><path d="M0 0 L5 4.5 L0 9 Z" fill="#4d8ad6"/></svg>
<svg style="left:1004px;top:651px" width="16" height="16" viewBox="0 0 16 16"><path d="M1.5 0.5 H10 L13.5 4 V15.5 H1.5 Z" fill="url(#gp)" stroke="#a8aeb4"/><path d="M10 0.5 V4 H13.5" fill="#fff" stroke="#a8aeb4"/></svg>
<svg style="left:1006px;top:660px" width="14" height="7" viewBox="0 0 14 7"><rect x="0.8" y="0.8" width="12.4" height="5.4" rx="2.7" fill="#e8e8e8" stroke="#555" stroke-width="1.5"/><path d="M3.5 3.5 H10.5" stroke="#333" stroke-width="1.6"/></svg>
<div class="t" style="left:1031px;top:676px;height:18px;line-height:18px">Обмен</div>
<svg style="left:1189px;top:679px" width="5" height="9" viewBox="0 0 5 9"><path d="M0 0 L5 4.5 L0 9 Z" fill="#4d8ad6"/></svg>
<svg style="left:1003px;top:676px" width="17" height="16" viewBox="0 0 17 16"><path d="M1.5 1.5 H6 L8.5 4 V13.5 H1.5 Z" fill="#fff" stroke="#6d84b8"/><path d="M8.5 2.5 H13 L15.5 5 V14.5 H8.5 Z" fill="#eef3fb" stroke="#6d84b8"/><path d="M4.5 6 L8 9.5 H6 V14.5 H3 V9.5 H1 Z" fill="#3cc43c" stroke="#1f8f1f" stroke-width="0.6"/><path d="M12 10 L8.5 6.5 H10.5 V1.5 H13.5 V6.5 H15.5 Z" fill="#3cc43c" stroke="#1f8f1f" stroke-width="0.6"/></svg>
<div style="left:1000px;top:700px;width:200px;height:1px;background:#e0e0e0"></div>
<div style="left:1000px;top:701px;width:200px;height:1px;background:#ffffff"></div>
<div class="t" style="left:1031px;top:707px;height:18px;line-height:18px">Панель инструментов</div>
<div class="cb" style="left:1004px;top:709px"></div>
<div style="left:1000px;top:731px;width:200px;height:1px;background:#e0e0e0"></div>
<div style="left:1000px;top:732px;width:200px;height:1px;background:#ffffff"></div>
<div class="t" style="left:1031px;top:738px;height:18px;line-height:18px">Настройки...</div>
<div class="t" style="left:1120px;top:737px;width:65px;height:18px;line-height:18px;text-align:right">Alt+Enter</div>
<svg style="left:1003px;top:738px" width="16" height="16" viewBox="0 0 16 16"><path d="M2.5 14.5 L9 8" stroke="#4a7ccc" stroke-width="4.2" stroke-linecap="round"/><path d="M2.5 14.5 L9 8" stroke="#9fc1f0" stroke-width="2" stroke-linecap="round"/><path d="M8.5 8.5 L10 5 A3 3 0 0 1 13 1.5 L12 4 L13.5 5 L15 3.5 A3 3 0 0 1 11 7 Z" fill="#b8b8b8" stroke="#7a7a7a" stroke-width="0.8"/></svg>
<div style="left:995px;top:362px;width:200px;height:25px;border:5px solid #ff0000;border-radius:8px"></div>
</body></html>
